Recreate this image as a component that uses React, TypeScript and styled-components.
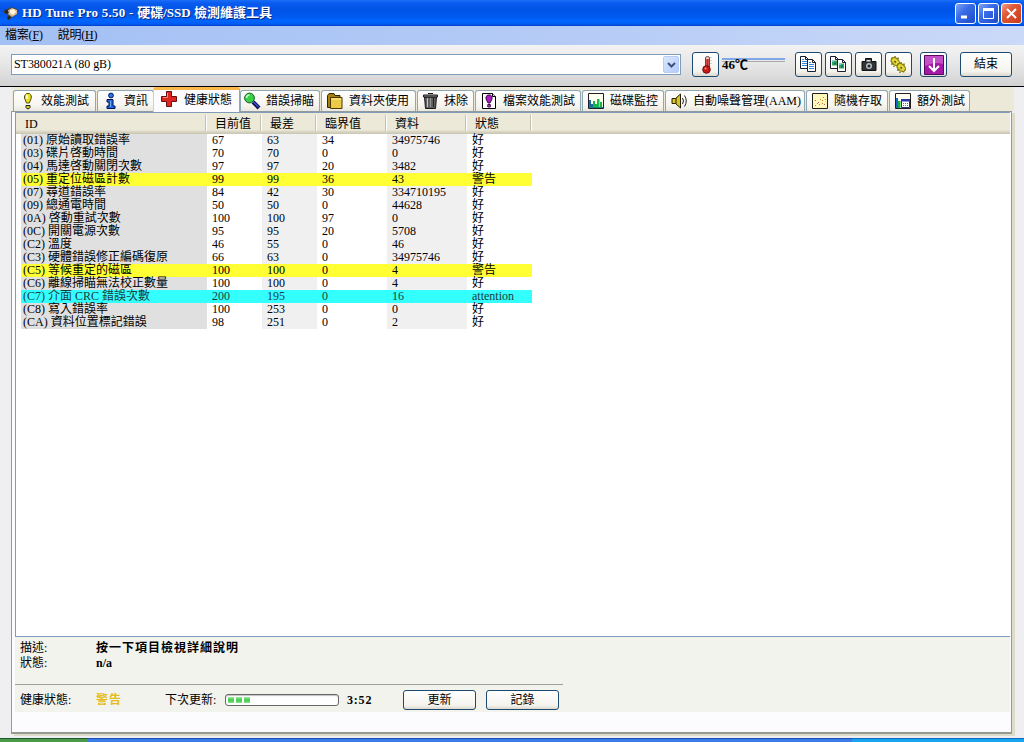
import React from "react";
import styled, { createGlobalStyle, css } from "styled-components";

const Global = createGlobalStyle`
  * { box-sizing: border-box; }
  html, body { margin: 0; padding: 0; overflow: hidden; }
  body {
    font: 12px/13px "Liberation Serif", "Noto Sans CJK TC", serif;
    color: #000;
    background: #efeff1;
  }
`;

const Window = styled.div`
  width: 1024px;
  height: 742px;
  display: flex;
  flex-direction: column;
  background: #efeff1;
  overflow: hidden;
  white-space: nowrap;
`;

const TitleBar = styled.header`
  height: 26px;
  flex: none;
  display: flex;
  align-items: center;
  padding: 0 2px 0 3px;
  background: linear-gradient(#1a6ef5 0, #0a5cf0 3px, #0054e6 9px, #0058ee 16px, #0066ff 21px, #005cf5 24px, #0040c8 26px);
`;

const Title = styled.h1`
  margin: 0 0 0 3px;
  flex: 1;
  font-size: 13px;
  line-height: 16px;
  font-weight: bold;
  color: #fff;
  text-shadow: 1px 1px 0 #0a2a80;
`;

const Product = styled.span`
  letter-spacing: 0.26px;
`;

const Caption = styled.button<{ $close?: boolean }>`
  width: 21px;
  height: 21px;
  margin-left: 2px;
  padding: 0;
  display: grid;
  place-items: center;
  border: 1px solid #fff;
  border-radius: 3px;
  background: ${(p) =>
    p.$close
      ? "linear-gradient(135deg, #f0a088 0%, #e05a38 35%, #c83a18 100%)"
      : "linear-gradient(135deg, #7ea4f4 0%, #3a6ce8 40%, #1c4cc8 100%)"};
`;

const MenuBar = styled.nav`
  height: 19px;
  flex: none;
  display: flex;
  gap: 15px;
  padding: 3px 5px 0;
  background: linear-gradient(90deg, #a3c0f4, #b3caf6 50%, #cad9f8);
`;

const MenuItem = styled.span`
  line-height: 13px;
  letter-spacing: -0.2px;
  u { text-underline-offset: 1px; }
`;

const Toolbar = styled.div`
  height: 42px;
  flex: none;
  display: flex;
  align-items: flex-start;
  padding: 7px 12px 0 11px;
  background: linear-gradient(#f3f3f3, #e4e4e4 55%, #d2d2d2);
  border-bottom: 1px solid #000;
`;

const DriveSelect = styled.div`
  width: 670px;
  height: 21px;
  margin-top: 2px;
  display: flex;
  align-items: center;
  justify-content: space-between;
  padding: 0 1px 0 2px;
  letter-spacing: -0.06px;
  border: 1px solid #7f9db9;
  background: #fff;
`;

const SelectArrow = styled.span`
  width: 16px;
  height: 17px;
  display: grid;
  place-items: center;
  border-radius: 2px;
  background: linear-gradient(135deg, #dce7ff, #b4cbf8);
  border: 1px solid #b8ccf5;
`;

const Button = styled.button<{ $w: number; $h?: number; $gap?: number }>`
  width: ${(p) => p.$w}px;
  height: ${(p) => p.$h ?? 25}px;
  margin: 0 0 0 ${(p) => p.$gap ?? 3}px;
  padding: 0;
  display: grid;
  place-items: center;
  font: inherit;
  color: #000;
  border: 1px solid #1c4a70;
  border-radius: 3px;
  background: linear-gradient(#fff, #f4f3ee 80%, #dcd8cc);
`;

const Temperature = styled.div`
  width: 63px;
  height: 20px;
  margin: 0 0 0 3px;
  padding-top: 6px;
  font-size: 13px;
  font-weight: bold;
  background: linear-gradient(#80a8e8, #80a8e8) 0 6px / 63px 2px no-repeat,
    linear-gradient(#a8a8a8, #a8a8a8) 0 9px / 63px 1px no-repeat;
`;

const TabStrip = styled.div`
  height: 24px;
  flex: none;
  display: flex;
  align-items: flex-end;
  margin: 0 10px 0 12px;
  padding-left: 1px;
  background: #ece9d8;
`;

const Tab = styled.div<{ $w: number; $gap?: number; $active?: boolean; $label?: number }>`
  width: ${(p) => p.$w}px;
  height: 21px;
  margin-left: ${(p) => p.$gap ?? 0}px;
  flex: none;
  display: flex;
  align-items: center;
  padding-left: ${(p) => (p.$label ?? 28) - 22}px;
  padding-top: 1px;
  gap: 6px;
  border: 1px solid #91a7b4;
  border-width: 1px 1px 0;
  border-radius: 3px 3px 0 0;
  background: linear-gradient(#fff, #f6f5f0 70%, #eae8df);
  svg { flex: none; margin: -2px 0 0 -1px; overflow: visible; }
  ${(p) =>
    p.$active &&
    css`
      height: 25px;
      margin-bottom: -1px;
      position: relative;
      padding-bottom: 3px;
      background: #fcfcfe;
      border-top: 3px solid #fbb84a;
      border-left-color: #c9d2d8;
    `}
`;

const Page = styled.main`
  height: 623px;
  width: 1001px;
  flex: none;
  margin-left: 11px;
  display: flex;
  flex-direction: column;
  border: 1px solid #8f9b9f;
  border-bottom: 2px solid #949a90;
  box-shadow: 3px 2px 0 #dddccb;
  background: #fcfcff;
  padding: 0 1px 0 3px;
`;

const List = styled.section`
  height: 525px;
  flex: none;
  border: 1px solid #7f9db9;
  border-right: 0;
  background: #fff;
`;

const columns = "186px 55px 55px 70px 80px 65px";

const HeaderRow = styled.div`
  height: 21px;
  display: grid;
  grid-template-columns: 190px 55px 55px 70px 80px 65px;
  background: linear-gradient(#ece9d8 0, #ece9d8 17px, #e0dccb 18px, #c8c4b2 21px);
`;

const HeaderCell = styled.span`
  margin: 2px 0 3px;
  padding: 2px 0 0 9px;
  line-height: 14px;
  border-right: 1px solid #c4c0ae;
  box-shadow: 1px 0 0 #fff;
`;

type Level = "ok" | "warn" | "info";
const tint = { ok: "", warn: "#ffff33", info: "#33ffff" };

const Row = styled.div<{ $level: Level }>`
  height: 13px;
  width: 511px;
  margin-left: 5px;
  display: grid;
  grid-template-columns: ${columns};
  line-height: 13px;
  color: ${(p) => (p.$level === "info" ? "#1c3c3c" : "#000")};
  background: ${(p) => tint[p.$level] || "#fff"};
  span { padding-left: 5px; }
  span:first-child { padding-left: 2px; }
  ${(p) =>
    p.$level === "ok" &&
    css`
      span:first-child { background: #e0e0e0; }
      span:nth-child(3), span:nth-child(5) { background: #f0f0f0; }
    `}
`;

const Details = styled.section`
  height: 75px;
  flex: none;
  padding: 4px 0 0 5px;
  background: #f3f3ee;
`;

const Line = styled.div`
  display: grid;
  grid-template-columns: 76px auto;
  height: 15px;
  line-height: 15px;
`;

const Description = styled.b`
  letter-spacing: 1px;
`;

const Rule = styled.div`
  width: 548px;
  margin: 13px 0 0 -5px;
  border-top: 1px solid #a0a09a;
`;

const Status = styled.div`
  display: flex;
  align-items: center;
  height: 20px;
  margin-top: 5px;
`;

const Label = styled.span<{ $w: number }>`
  width: ${(p) => p.$w}px;
`;

const Warning = styled.b`
  width: 69px;
  letter-spacing: 1px;
  color: #e4bc1c;
`;

const Progress = styled.div`
  width: 114px;
  height: 12px;
  display: flex;
  gap: 2px;
  padding: 2px;
  border: 1px solid #686868;
  border-radius: 3px;
  background: #fff;
  box-shadow: inset 0 1px 1px #c0c0c0;
`;

const Chunk = styled.i`
  width: 6px;
  margin-left: 0;
  background: linear-gradient(#a8eaa8, #3cc84a 50%, #86e08a);
`;

const Clock = styled.b`
  width: 56px;
  padding-left: 8px;
  letter-spacing: 0.8px;
`;

const Taskbar = styled.footer`
  height: 4px;
  margin-top: auto;
  display: grid;
  grid-template-columns: 88px 764px 172px;
`;

const TaskPart = styled.div<{ $c: string; $top: string }>`
  background: ${(p) => p.$c};
  border-top: 1px solid ${(p) => p.$top};
`;

/* icons */
const S = ({ children, w = 16, h = 16 }: { children: React.ReactNode; w?: number; h?: number }) => (
  <svg width={w} height={h} viewBox={`0 0 ${w} ${h}`}>{children}</svg>
);

const AppIcon = () => (
  <S>
    <path d="M1 6l7-4 6 2v5l-7 5-3-3 2-2-5-1z" fill="#4c443c" />
    <path d="M4 6l5-3 5 2v4l-5 3-4-3z" fill="#d8b890" />
    <path d="M7 5l4-1 2 3-3 3-3-2z" fill="#fff4dc" />
    <path d="M1 6l3-2 2 4-3 1zM5 11l3 1-2 3-2-1z" fill="#22252c" />
  </S>
);
const Bulb = () => (
  <S>
    <path d="M6.500 1.500l1-1h3l1 1 .8 1.500v2l-2 5H7.500l-2-5V3z" fill="#e8e020" stroke="#55500a" />
    <path d="M8 2v4" stroke="#fff" strokeWidth="1.500" />
    <path d="M7 12.500h4v2l-1 1.200H8l-1-1.200z" fill="#d8cc28" stroke="#222" />
  </S>
);
const Info = () => (
  <S>
    <circle cx="9" cy="2.500" r="2.400" fill="#2878e8" stroke="#001858" />
    <path d="M5 6.500h6v6.500h2v2.500H5V13h2V9H5z" fill="#1c68e0" stroke="#001050" />
    <path d="M8.500 8v6" stroke="#68b0ff" />
  </S>
);
const Cross = () => (
  <S w={18}>
    <path d="M6.500.5h5v5h5v5h-5v5h-5v-5h-5v-5h5z" fill="#dc2420" stroke="#601010" />
    <path d="M7.500 2v4.500H3" stroke="#ff8880" fill="none" />
  </S>
);
const Lens = () => (
  <S>
    <path d="M9 9l6 6" stroke="#101050" strokeWidth="4" />
    <path d="M9 8.500l5.500 5.500" stroke="#3850d8" strokeWidth="1.500" />
    <circle cx="5.500" cy="5" r="4.900" fill="#38d048" stroke="#186020" />
    <path d="M2.500 5a3 3 0 013-3" stroke="#c8ffc8" strokeWidth="1.500" fill="none" />
  </S>
);
const Folder = () => (
  <S>
    <path d="M.5 2.500l1.500-2h5l1 2h5v12H.5z" fill="#a88008" stroke="#302800" />
    <path d="M3.500 4.500h11.500v11H3.500z" fill="#ecca48" stroke="#483800" />
    <path d="M4.500 6H14" stroke="#fff090" />
  </S>
);
const Trash = () => (
  <S>
    <path d="M2.500 4h12l-1 11.500h-10z" fill="#606060" stroke="#181818" />
    <path d="M1.500 2h14v2h-14zM6 .5h5" fill="#888" stroke="#181818" />
    <path d="M5.500 5v9" stroke="#c8c8c8" />
    <path d="M8.500 5v9" stroke="#999" />
    <path d="M11.500 5v9" stroke="#222" />
  </S>
);
const FileMark = () => (
  <S>
    <path d="M1.500.5h10l3 3v12h-13z" fill="#fff" stroke="#000" />
    <path d="M11.500.5v3h3" fill="#ddd" stroke="#000" />
    <path d="M6.500 2h3l1.500 2v2L9 10H7L5 6V4z" fill="#a81cc0" stroke="#400848" />
    <path d="M6.800 11.500h2.500v2.500H6.800z" fill="#c840d8" stroke="#400848" />
  </S>
);
const Bars = () => (
  <S>
    <path d="M.5.5h15v15H.5z" fill="#fffff0" stroke="#202020" />
    <path d="M1 15V7h2v8zM3 15v-4h2v4z" fill="#1868b0" />
    <path d="M5 15V8h2v7zM7 15v-4h2v4zM9 15V6h2.500v9zM12 15V9h2v6z" fill="#18b848" />
    <path d="M1 14h14v1H1z" fill="#108878" />
  </S>
);
const Speaker = () => (
  <S>
    <path d="M1 5.500h3.500L9.500 1v14l-5-4.500H1z" fill="#d8c428" stroke="#282000" />
    <path d="M5 5v6" stroke="#282000" />
    <path d="M11.500 5q2 3 0 6M13.500 2.500q3.500 5.500 0 11" stroke="#222" fill="none" />
  </S>
);
const Scatter = () => (
  <S>
    <path d="M.5.5h15v15H.5z" fill="#fff8b8" stroke="#202020" />
    <path d="M3 12.500h1M5 10.500h1M7 11.500h1M8 6.500h1M10 7.500h1M11 4.500h1M10 10.500h1M13 6.500h1" stroke="#d07818" />
    <path d="M3 7.500h1M6 9.500h1M12 11.500h1" stroke="#d050a0" />
  </S>
);
const Extra = () => (
  <S>
    <path d="M.5.5h15v15H.5z" fill="#fffff0" stroke="#202020" />
    <path d="M1 5h2v10H1z" fill="#1868c0" />
    <path d="M3 8h2.500v7H3z" fill="#18b040" />
    <path d="M6.500 6.500h8v8h-8z" fill="#fff" stroke="#283070" />
    <path d="M6 6h9v2.500H6z" fill="#2838a8" />
    <path d="M8 10.500h6M8 12.500h6" stroke="#c04080" strokeDasharray="1 1" />
  </S>
);
const Thermo = () => (
  <S w={14} h={18}>
    <path d="M6.500 11V2q0-1.500 2-1.500T10.500 2v9" fill="#e8d8d0" stroke="#604848" />
    <path d="M8.500 3v9" stroke="#d02020" strokeWidth="2.500" />
    <path d="M12 1v8" stroke="#aaa" strokeDasharray="1 2" />
    <circle cx="7.500" cy="13.500" r="3.800" fill="#c81818" stroke="#681010" />
    <circle cx="6.500" cy="12.500" r="1" fill="#ffa090" />
  </S>
);
const Copy = ({ image }: { image?: boolean }) => (
  <S w={17} h={17}>
    {[0, 7].map((x) => (
      <g key={x} transform={`translate(${x} ${x ? 3 : 0})`}>
        <path d="M.5.5h5l3 3v9h-8z" fill="#fff" stroke="#181c2c" />
        <path d="M5.500.5v3h3" fill="none" stroke="#181c2c" />
        {image ? (
          <>
            <path d="M2 4.500h5v5H2z" fill="#30a850" />
            <path d="M4 6.500h2v2H4z" fill="#186888" />
            <path d="M2 4.500h2v1.500H2z" fill="#70c8e8" />
          </>
        ) : (
          <path d="M2 3.500h2M2 5.500h5M2 7.500h5M2 9.500h5" stroke="#3c88d8" />
        )}
      </g>
    ))}
  </S>
);
const Camera = () => (
  <S>
    <path d="M1 4.500h3.500V1.500h6v3h4.500v9H1z" fill="#303438" stroke="#111" strokeLinejoin="round" />
    <path d="M5.500 3h4v1.500h-4z" fill="#ddd" />
    <circle cx="8" cy="9" r="3" fill="#b8c0c0" />
    <circle cx="8" cy="9" r="1.500" fill="#202428" />
  </S>
);
const Gears = () => (
  <S w={17} h={17}>
    {[0, 6].map((d) => (
      <g key={d} transform={`translate(${d} ${d})`}>
        <path d="M2 1.500v1.500M5 0v2M8 1.500v2M.5 5h1.500M1 8h2M4 9.500V11M7.500 10.500V9M10 7.500H8.500" stroke="#847c10" strokeWidth="1.500" />
        <ellipse cx="5.300" cy="5.500" rx="4.600" ry="3.300" transform="rotate(42 5.300 5.500)" fill="#d8cc28" stroke="#7c740c" />
        <path d="M3 4l4.500 4M5 3.500l3 3" stroke="#f8f080" />
        <path d="M4.500 5l1.500 1.500" stroke="#5c5408" strokeWidth="1.500" />
      </g>
    ))}
  </S>
);
const Down = () => (
  <S w={20} h={20}>
    <path d="M.5.5h19v19H.5z" fill="#a418a8" stroke="#580860" />
    <path d="M1 1h18v8q-8-3-18 2z" fill="#c450c8" />
    <path d="M10 3v13M5 11l5 5 5-5" stroke="#fff" strokeWidth="2" fill="none" />
  </S>
);

const rows: [string, string, string, string, string, string, Level?][] = [
  ["(01) 原始讀取錯誤率", "67", "63", "34", "34975746", "好"],
  ["(03) 碟片啓動時間", "70", "70", "0", "0", "好"],
  ["(04) 馬達啓動關閉次數", "97", "97", "20", "3482", "好"],
  ["(05) 重定位磁區計數", "99", "99", "36", "43", "警告", "warn"],
  ["(07) 尋道錯誤率", "84", "42", "30", "334710195", "好"],
  ["(09) 總通電時間", "50", "50", "0", "44628", "好"],
  ["(0A) 啓動重試次數", "100", "100", "97", "0", "好"],
  ["(0C) 開關電源次數", "95", "95", "20", "5708", "好"],
  ["(C2) 溫度", "46", "55", "0", "46", "好"],
  ["(C3) 硬體錯誤修正編碼復原", "66", "63", "0", "34975746", "好"],
  ["(C5) 等候重定的磁區", "100", "100", "0", "4", "警告", "warn"],
  ["(C6) 離線掃瞄無法校正數量", "100", "100", "0", "4", "好"],
  ["(C7) 介面 CRC 錯誤次數", "200", "195", "0", "16", "attention", "info"],
  ["(C8) 寫入錯誤率", "100", "253", "0", "0", "好"],
  ["(CA) 資料位置標記錯誤", "98", "251", "0", "2", "好"],
];

const tabs: { name: string; icon: React.ReactNode; w: number; gap?: number; label?: number; active?: boolean }[] = [
  { name: "效能測試", icon: <Bulb />, w: 83 },
  { name: "資訊", icon: <Info />, w: 57, gap: 1, label: 27 },
  { name: "健康狀態", icon: <Cross />, w: 87, gap: -1, label: 29, active: true },
  { name: "錯誤掃瞄", icon: <Lens />, w: 80, label: 26 },
  { name: "資料夾使用", icon: <Folder />, w: 95, gap: 1 },
  { name: "抹除", icon: <Trash />, w: 57, gap: 1, label: 27 },
  { name: "檔案效能測試", icon: <FileMark />, w: 106, gap: 1 },
  { name: "磁碟監控", icon: <Bars />, w: 82, gap: 1 },
  { name: "自動噪聲管理(AAM)", icon: <Speaker />, w: 140, gap: 1 },
  { name: "隨機存取", icon: <Scatter />, w: 82, gap: 1 },
  { name: "額外測試", icon: <Extra />, w: 81, gap: 1 },
];

export default function App() {
  return (
    <Window>
      <Global />
      <TitleBar>
        <AppIcon />
        <Title><Product>HD Tune Pro 5.50 - </Product>硬碟/SSD 檢測維護工具</Title>
        <Caption><S w={13} h={13}><path d="M2 10h6" stroke="#fff" strokeWidth="3" /></S></Caption>
        <Caption><S w={13} h={13}><path d="M1.500 2v9.500h10V2" stroke="#fff" fill="none" /><path d="M1 2.500h11" stroke="#fff" strokeWidth="3" /></S></Caption>
        <Caption $close><S w={13} h={13}><path d="M2 2l9 9M11 2l-9 9" stroke="#fff" strokeWidth="2" /></S></Caption>
      </TitleBar>
      <MenuBar>
        <MenuItem>檔案(<u>F</u>)</MenuItem>
        <MenuItem>說明(<u>H</u>)</MenuItem>
      </MenuBar>
      <Toolbar>
        <DriveSelect>
          <span>ST380021A (80 gB)</span>
          <SelectArrow><S w={9} h={6}><path d="M1 1l3.500 3.500L8 1" stroke="#3c5080" strokeWidth="2" fill="none" /></S></SelectArrow>
        </DriveSelect>
        <Button $w={27} $gap={11}><Thermo /></Button>
        <Temperature>46℃</Temperature>
        <Button $w={27} $gap={10}><Copy /></Button>
        <Button $w={27}><Copy image /></Button>
        <Button $w={27}><Camera /></Button>
        <Button $w={27}><Gears /></Button>
        <Button $w={27} $gap={8}><Down /></Button>
        <Button $w={52} $gap={13}>結束</Button>
      </Toolbar>
      <TabStrip>
        {tabs.map((t) => (
          <Tab key={t.name} $w={t.w} $gap={t.gap} $label={t.label} $active={t.active}>
            {t.icon}
            <span>{t.name}</span>
          </Tab>
        ))}
      </TabStrip>
      <Page>
        <List>
          <HeaderRow>
            {["ID", "目前值", "最差", "臨界值", "資料", "狀態"].map((h) => (
              <HeaderCell key={h}>{h}</HeaderCell>
            ))}
          </HeaderRow>
          {rows.map(([id, cur, worst, limit, data, state, level]) => (
            <Row key={id} $level={level ?? "ok"}>
              <span>{id}</span>
              <span>{cur}</span>
              <span>{worst}</span>
              <span>{limit}</span>
              <span>{data}</span>
              <span>{state}</span>
            </Row>
          ))}
        </List>
        <Details>
          <Line><span>描述:</span><Description>按一下項目檢視詳細說明</Description></Line>
          <Line><span>狀態:</span><b>n/a</b></Line>
          <Rule />
          <Status>
            <Label $w={76}>健康狀態:</Label>
            <Warning>警告</Warning>
            <Label $w={60}>下次更新:</Label>
            <Progress><Chunk /><Chunk /><Chunk /></Progress>
            <Clock>3:52</Clock>
            <Button $w={73} $h={20} $gap={8}>更新</Button>
            <Button $w={73} $h={20} $gap={10}>記錄</Button>
          </Status>
        </Details>
      </Page>
      <Taskbar>
        <TaskPart $c="#4a9a4a" $top="#1c5a30" />
        <TaskPart $c="#3a7ce8" $top="#1c50b8" />
        <TaskPart $c="#18a4ee" $top="#1068c0" />
      </Taskbar>
    </Window>
  );
}
